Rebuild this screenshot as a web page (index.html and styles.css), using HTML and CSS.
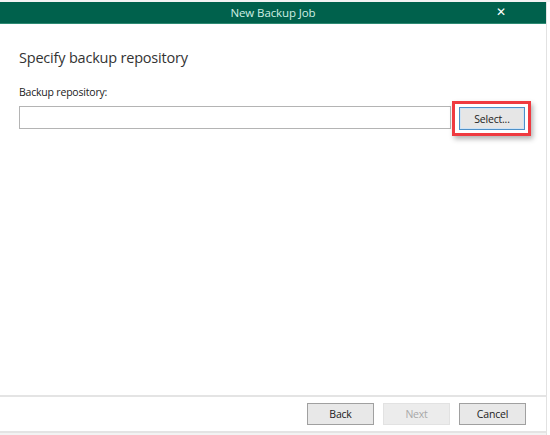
FILE: index.html
```html
<!DOCTYPE html>
<html>
<head>
<meta charset="utf-8">
<link rel="stylesheet" href="styles.css">
</head>
<body>
<div class="screen">
  <div class="window">
    <div class="titlebar">
      <span class="title">New Backup Job</span>
      <span class="close">✕</span>
    </div>
    <div class="content">
      <h1 class="heading">Specify backup repository</h1>
      <div class="label">Backup repository:</div>
      <div class="row">
        <div class="input"></div>
        <div class="highlight">
          <button class="btn select">Select...</button>
        </div>
      </div>
    </div>
    <div class="footer">
      <button class="btn">Back</button>
      <button class="btn disabled">Next</button>
      <button class="btn">Cancel</button>
    </div>
  </div>
  <div class="edge"></div>
</div>
</body>
</html>
```
FILE: styles.css
```css
* { box-sizing: border-box; }
html, body { margin: 0; padding: 0; }
body {
  width: 550px;
  height: 435px;
  background: #f3f3f3;
  font-family: "Open Sans", "Noto Sans", sans-serif;
  overflow: hidden;
}
.screen {
  display: flex;
  height: 435px;
  padding-top: 2px;
}
.window {
  width: 546px;
  height: 431px;
  background: #fff;
  display: flex;
  flex-direction: column;
  border-bottom: 2px solid #e4e4e4;
}
.edge {
  flex: 1;
  background: #fff;
  border-left: 1px solid #e2e2e2;
}
.titlebar {
  height: 22px;
  background: #00614c;
  display: flex;
  align-items: center;
  justify-content: center;
  position: relative;
  border-bottom: 1px solid #2d8a73;
}
.title {
  color: #cfeee4;
  font-size: 11.5px;
  letter-spacing: -0.1px;
}
.close {
  position: absolute;
  right: 40px;
  top: 3px;
  color: #fff;
  font-size: 12px;
  font-weight: bold;
  font-family: "DejaVu Sans", sans-serif;
}
.content {
  flex: 1;
  padding: 0 0 0 19px;
}
.heading {
  margin: 24px 0 0 0;
  font-size: 14.5px;
  font-weight: normal;
  color: #333;
  letter-spacing: -0.2px;
  height: 20px;
  line-height: 20px;
}
.label {
  margin-top: 17px;
  font-size: 10.5px;
  color: #222;
  letter-spacing: -0.2px;
  height: 14px;
  line-height: 14px;
}
.row {
  display: flex;
  align-items: center;
  margin-top: 1px;
}
.input {
  width: 432px;
  height: 23px;
  border: 1px solid #b4b4b4;
  background: #fff;
  margin-top: -1px;
}
.highlight {
  margin-left: 1px;
  border: 3px solid #ef3a40;
  padding: 3px 3px 3px 4px;
  box-shadow: 2px 3px 5px rgba(0,0,0,0.3);
  margin-top: 1px;
}
.btn {
  width: 67px;
  height: 22px;
  font-family: "Open Sans", "Noto Sans", sans-serif;
  font-size: 10.5px;
  color: #222;
  background: #e8e8e8;
  border: 1px solid #a0a0a0;
  padding: 0;
  letter-spacing: -0.2px;
}
.btn.select {
  display: block;
  width: 66px;
  height: 23px;
  border: 1px solid #4d90c8;
  box-shadow: inset 0 0 0 1px #cfe3f5;
  background: #e6e6e6;
}
.btn.disabled {
  color: #a8a8a8;
  background: #ececec;
  border-color: #e2e2e2;
}
.footer {
  height: 36px;
  border-top: 2px solid #e4e4e4;
  display: flex;
  justify-content: flex-end;
  align-items: center;
  gap: 9px;
  padding-right: 20px;
}
```
